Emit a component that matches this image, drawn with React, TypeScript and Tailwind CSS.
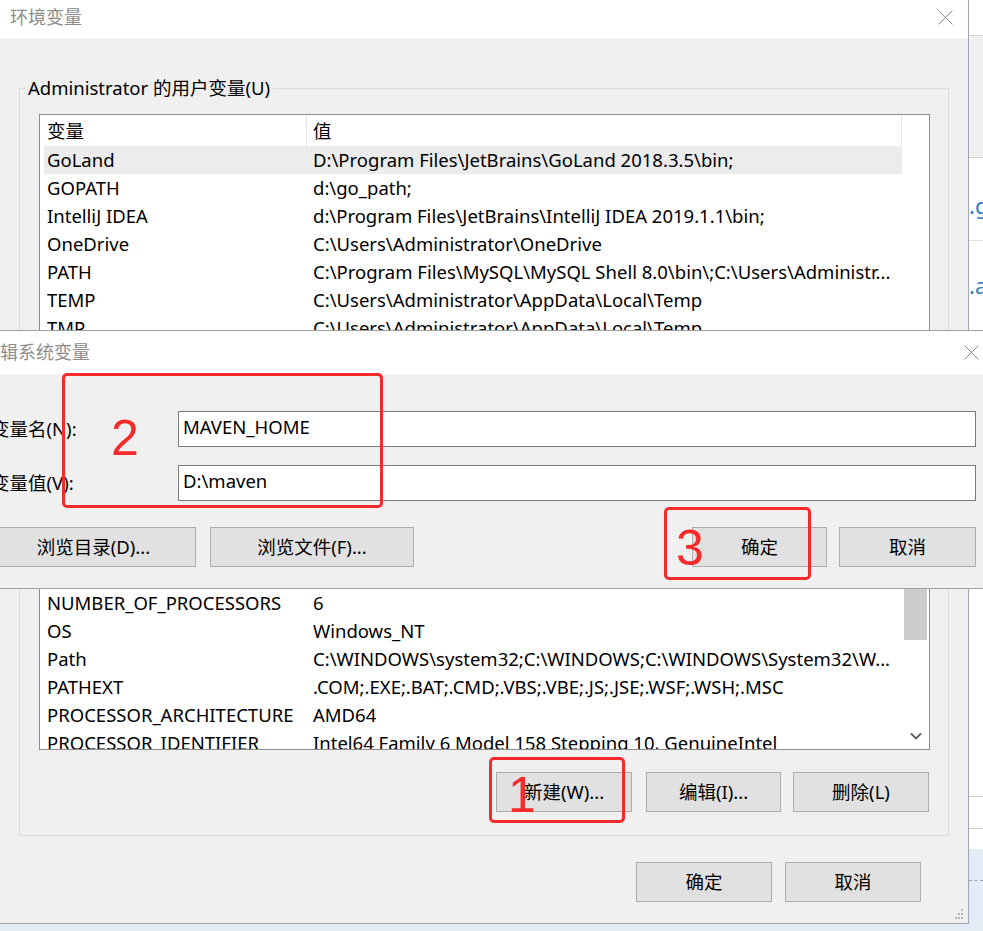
const userVars: [string, string][] = [
  ['GoLand', 'D:\\Program Files\\JetBrains\\GoLand 2018.3.5\\bin;'],
  ['GOPATH', 'd:\\go_path;'],
  ['IntelliJ IDEA', 'd:\\Program Files\\JetBrains\\IntelliJ IDEA 2019.1.1\\bin;'],
  ['OneDrive', 'C:\\Users\\Administrator\\OneDrive'],
  ['PATH', 'C:\\Program Files\\MySQL\\MySQL Shell 8.0\\bin\\;C:\\Users\\Administr...'],
  ['TEMP', 'C:\\Users\\Administrator\\AppData\\Local\\Temp'],
  ['TMP', 'C:\\Users\\Administrator\\AppData\\Local\\Temp'],
  ['', ''],
];

const sysVars: [string, string][] = [
  ['NUMBER_OF_PROCESSORS', '6'],
  ['OS', 'Windows_NT'],
  ['Path', 'C:\\WINDOWS\\system32;C:\\WINDOWS;C:\\WINDOWS\\System32\\W...'],
  ['PATHEXT', '.COM;.EXE;.BAT;.CMD;.VBS;.VBE;.JS;.JSE;.WSF;.WSH;.MSC'],
  ['PROCESSOR_ARCHITECTURE', 'AMD64'],
  ['PROCESSOR_IDENTIFIER', 'Intel64 Family 6 Model 158 Stepping 10, GenuineIntel'],
];

function CloseX() {
  return (
    <svg width="15" height="15" viewBox="0 0 15 15">
      <path d="M0.5 0.5L14.5 14.5M14.5 0.5L0.5 14.5" stroke="#8a8a8a" strokeWidth="1" fill="none" />
    </svg>
  );
}

function WinButton({ label, w }: { label: string; w: string }) {
  return (
    <button className={`${w} h-[40px] shrink-0 border border-[#adadad] bg-[#e1e1e1] text-[18.5px] text-black`}>
      {label}
    </button>
  );
}

function Row({ name, value, selected }: { name: string; value: string; selected?: boolean }) {
  return (
    <div
      className={`ml-[4px] flex h-[28px] w-[858px] items-center whitespace-nowrap pl-[3px] text-[18.5px] text-black ${
        selected ? 'bg-[#ececec]' : ''
      }`}
    >
      <div className="w-[266px] shrink-0 overflow-hidden">{name}</div>
      <div className="overflow-hidden">{value}</div>
    </div>
  );
}

function ListHeader() {
  return (
    <div className="flex h-[31px] text-[18.5px] text-black">
      <div className="flex w-[267px] items-center border-r border-[#e5e5e5] pl-[7px]">变量</div>
      <div className="flex w-[595px] items-center border-r border-[#e5e5e5] pl-[6px]">值</div>
    </div>
  );
}

function RightStrip() {
  return (
    <div className="flex w-[14px] flex-col overflow-hidden">
      <div className="h-[36px] shrink-0 border-b border-[#d6d6d6] bg-white" />
      <div className="h-[122px] shrink-0 border-b border-[#d6d6d6] bg-[#f0f0f0]" />
      <div className="h-[83px] shrink-0 border-b border-[#e3e3e3] bg-white pt-[33px] text-[22px] leading-[28px] text-[#2f7cc6] whitespace-nowrap">
        .g
      </div>
      <div className="flex-1 bg-white pt-[30px] text-[22px] leading-[28px] text-[#2f7cc6] whitespace-nowrap">.a</div>
      <div className="h-[32px] shrink-0 border-t border-[#d0d0d0] bg-white" />
      <div className="h-[21px] shrink-0 border-t border-[#d0d0d0] bg-white" />
      <div className="h-[32px] shrink-0 border-b border-dashed border-[#9aa6b4] bg-[#e4ecf7]" />
      <div className="h-[43px] shrink-0 bg-[#e4ecf7]" />
    </div>
  );
}

function MainWindow() {
  return (
    <div className="relative flex h-[924px] w-[969px] shrink-0 flex-col border-r border-b border-[#9ea7b3] bg-[#f0f0f0]">
      <div className="flex h-[38px] shrink-0 items-center justify-between bg-white pb-[3px] pl-[10px] pr-[15px]">
        <span className="text-[18px] text-[#8c8c8c]">环境变量</span>
        <CloseX />
      </div>

      <div className="flex-1 pt-[38px]">
        <fieldset className="ml-[19px] w-[930px] border border-[#dcdcdc] pb-[23px]">
          <legend className="ml-[5px] px-[3px] text-[18.5px] leading-[24px] text-black">
            Administrator 的用户变量(U)
          </legend>

          {/* user variables */}
          <div className="ml-[19px] mt-[14px] h-[250px] w-[891px] overflow-hidden border border-[#8c8c8c] bg-white">
            <ListHeader />
            {userVars.map(([n, v], i) => (
              <Row key={i} name={n} value={v} selected={i === 0} />
            ))}
          </div>

          {/* system variables */}
          <div className="ml-[19px] mt-[193px] flex h-[193px] w-[891px] overflow-hidden border border-[#8c8c8c] bg-white">
            <div className="w-[862px] shrink-0">
              <ListHeader />
              {sysVars.map(([n, v]) => (
                <Row key={n} name={n} value={v} />
              ))}
            </div>
            <div className="flex w-[27px] flex-col bg-white">
              <div className="mx-[2px] mt-[20px] h-[62px] bg-[#cdcdcd]" />
              <div className="flex-1" />
              <div className="flex h-[26px] items-center justify-center">
                <svg width="12" height="8" viewBox="0 0 12 8">
                  <path d="M1 1.5l5 5 5-5" stroke="#606060" strokeWidth="1.8" fill="none" />
                </svg>
              </div>
            </div>
          </div>

          <div className="ml-[19px] mt-[22px] flex w-[891px] justify-end pr-[1px]">
            <WinButton label="新建(W)..." w="w-[136px]" />
            <div className="w-[14px]" />
            <WinButton label="编辑(I)..." w="w-[135px]" />
            <div className="w-[12px]" />
            <WinButton label="删除(L)" w="w-[136px]" />
          </div>
        </fieldset>

        <div className="mt-[26px] flex justify-end gap-[13px] pr-[47px]">
          <WinButton label="确定" w="w-[136px]" />
          <WinButton label="取消" w="w-[136px]" />
        </div>
      </div>

      <svg className="absolute bottom-[3px] right-[4px]" width="12" height="12" viewBox="0 0 12 12">
        <g fill="#b5b5b5">
          <rect x="9" y="1" width="2" height="2" />
          <rect x="6" y="5" width="2" height="2" />
          <rect x="9" y="5" width="2" height="2" />
          <rect x="3" y="9" width="2" height="2" />
          <rect x="6" y="9" width="2" height="2" />
          <rect x="9" y="9" width="2" height="2" />
        </g>
      </svg>
    </div>
  );
}

function EditDialog() {
  return (
    <div className="absolute left-[-30px] top-[330px] flex h-[259px] w-[1025px] flex-col border border-[#a0a0a0] bg-[#f0f0f0]">
      <div className="flex h-[43px] shrink-0 items-center justify-between bg-white pl-[11px] pr-[15px]">
        <span className="text-[18px] text-[#8c8c8c]">编辑系统变量</span>
        <CloseX />
      </div>
      <div className="flex-1 pl-[20px] pr-[18px] pt-[37px]">
        <div className="flex h-[36px] items-center">
          <div className="w-[187px] shrink-0 text-[18.5px] text-black">变量名(N):</div>
          <div className="flex h-full flex-1 items-center border border-[#7a7a7a] bg-white pb-[4px] pl-[4px] text-[18.5px] text-black">
            MAVEN_HOME
          </div>
        </div>
        <div className="mt-[18px] flex h-[36px] items-center">
          <div className="w-[187px] shrink-0 text-[18.5px] text-black">变量值(V):</div>
          <div className="flex h-full flex-1 items-center border border-[#7a7a7a] bg-white pb-[4px] pl-[4px] text-[18.5px] text-black">
            D:\maven
          </div>
        </div>
        <div className="mt-[26px] flex">
          <WinButton label="浏览目录(D)..." w="w-[205px]" />
          <div className="w-[14px]" />
          <WinButton label="浏览文件(F)..." w="w-[204px]" />
          <div className="flex-1" />
          <WinButton label="确定" w="w-[135px]" />
          <div className="w-[12px]" />
          <WinButton label="取消" w="w-[137px]" />
        </div>
      </div>
    </div>
  );
}

export default function App() {
  return (
    <div className="relative h-[931px] w-[983px] overflow-hidden bg-[#e4ecf6] font-['Noto_Sans','Noto_Sans_CJK_SC',sans-serif]">
      <div className="flex h-[924px]">
        <MainWindow />
        <RightStrip />
      </div>

      <EditDialog />

      {/* red annotations */}
      <div className="absolute left-[62px] top-[373px] h-[135px] w-[321px] rounded-[5px] border-[3px] border-[#f52a2a]" />
      <div className="absolute left-[664px] top-[507px] h-[73px] w-[147px] rounded-[5px] border-[3px] border-[#f52a2a]" />
      <div className="absolute left-[489px] top-[757px] h-[66px] w-[136px] rounded-[5px] border-[3px] border-[#f52a2a]" />
      <span className="absolute left-[111px] top-[413px] font-['Liberation_Sans',sans-serif] text-[50px] leading-none text-[#f52a2a]">2</span>
      <span className="absolute left-[676px] top-[523px] font-['Liberation_Sans',sans-serif] text-[50px] leading-none text-[#f52a2a]">3</span>
      <span className="absolute left-[508px] top-[770px] font-['Liberation_Sans',sans-serif] text-[50px] leading-none text-[#f52a2a]">1</span>
    </div>
  );
}
